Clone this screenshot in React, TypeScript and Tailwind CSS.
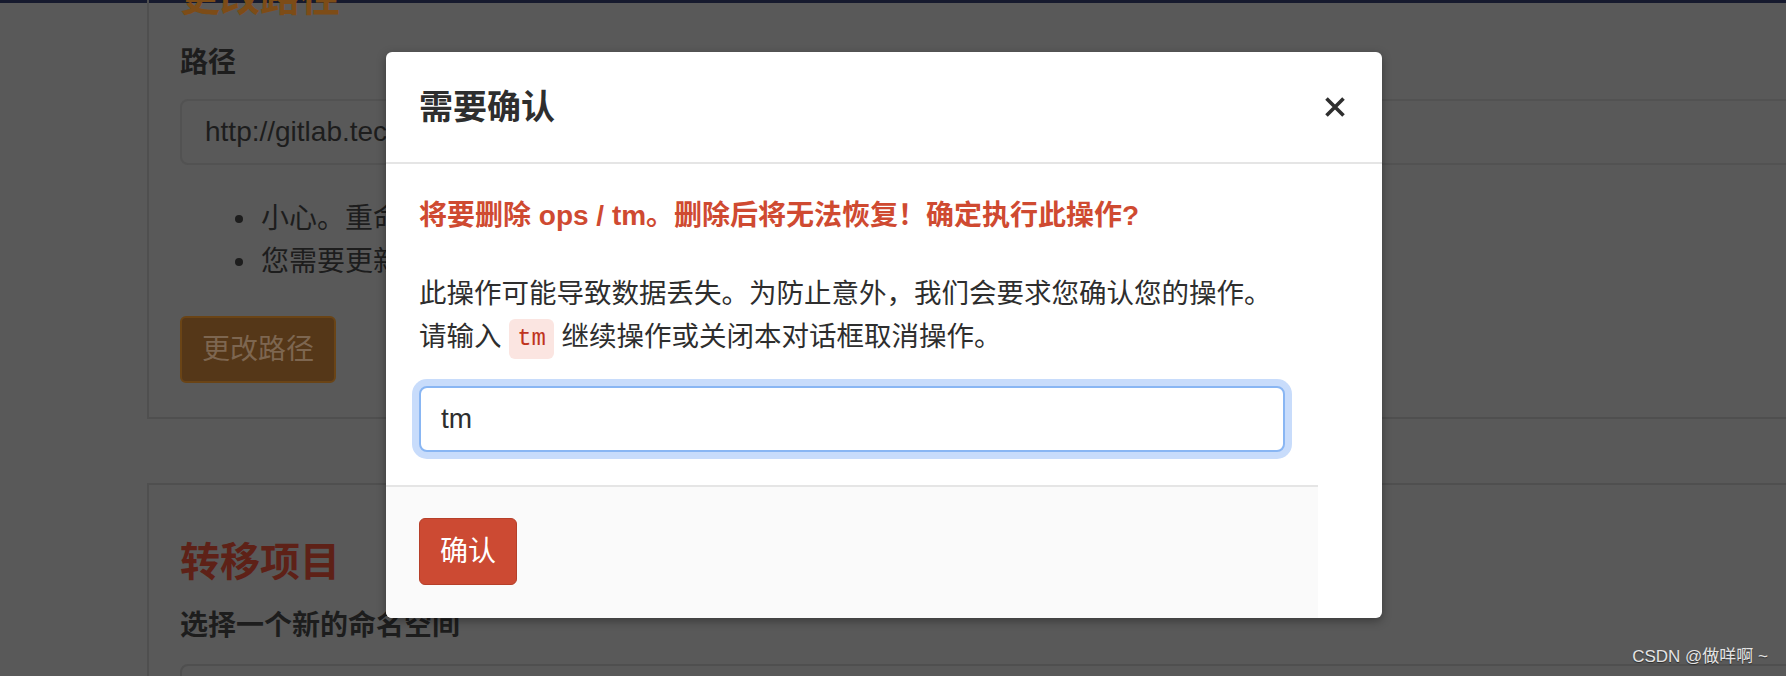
import React from 'react'

const CloseIcon: React.FC = () => (
	<svg width="22" height="22" viewBox="0 0 22 22" fill="none">
		<path d="M2.5 2.5 L19.5 19.5 M19.5 2.5 L2.5 19.5" stroke="#2e2e2e" strokeWidth="3.6" />
	</svg>
)

const ConfirmModal: React.FC = () => {
	return (
		<div className="absolute left-[386px] top-[52px] flex h-[566px] w-[996px] flex-col overflow-hidden rounded-[6px] bg-white shadow-[0_3px_10px_rgba(0,0,0,0.35)]">
			<div className="flex h-[112px] shrink-0 items-center justify-between border-b-2 border-[#e5e5e5] pl-[33px] pr-[36px]">
				<h3 className="text-[34px] font-bold leading-[44px] text-[#2e2e2e]">需要确认</h3>
				<button className="flex h-[22px] w-[22px] items-center justify-center">
					<CloseIcon />
				</button>
			</div>
			<div className="w-[932px] px-[33px] pb-[33px] pt-[30px]">
				<p className="mb-[35px] whitespace-nowrap text-[28px] font-bold leading-[43px] text-[#cf4a31]">
					将要删除 ops / tm。删除后将无法恢复！确定执行此操作?
				</p>
				<p className="mb-[27px] whitespace-nowrap text-[27.5px] leading-[43px] text-[#2e2e2e]">
					此操作可能导致数据丢失。为防止意外，我们会要求您确认您的操作。
					<br />
					请输入{' '}
					<code className="inline-block rounded-[6px] bg-[#fbe5e1] px-[8px] align-middle font-['Liberation_Mono','DejaVu_Sans_Mono',monospace] text-[24px] leading-[40px] text-[#c0341d]">
						tm
					</code>{' '}
					继续操作或关闭本对话框取消操作。
				</p>
				<div className="flex h-[66px] w-[866px] items-center rounded-[8px] border-2 border-[#89b6f3] bg-white pl-[20px] text-[28px] text-[#2e2e2e] shadow-[0_0_0_7px_#c8dcfb]">
					tm
				</div>
			</div>
			<div className="w-[932px] flex-1 border-t-2 border-[#e5e5e5] bg-[#fafafa] px-[33px] pt-[31px]">
				<button className="rounded-[6px] border border-[#b63f29] bg-[#cc4a33] px-[20px] py-[11px] text-[28px] leading-[43px] text-white">
					确认
				</button>
			</div>
		</div>
	)
}

const App: React.FC = () => {
	return (
		<div className="relative h-[676px] w-full overflow-hidden bg-[#595959] font-['Liberation_Sans','Noto_Sans_CJK_SC',sans-serif] text-[#1d1d1d]">
			<div className="h-[3px] bg-[#161a2e]" />
			<div className="ml-[147px] w-[1700px]">
				<section className="border-b-2 border-l-2 border-[#4f4f4f] pb-[34px] pl-[31px]">
					<h2 className="-mt-[30px] text-[40px] font-bold leading-[48px] text-[#7d4c17]">更改路径</h2>
					<div className="mt-[20px] text-[28px] font-bold leading-[43px]">路径</div>
					<div className="mt-[15px] flex h-[66px] items-center rounded-[8px] border-2 border-[#525252] pl-[23px] text-[28px]">
						http://gitlab.tech.com/ops/
					</div>
					<div className="mt-[32px] text-[28px] leading-[43px]">
						<div className="flex items-center">
							<span className="ml-[55px] mr-[18px] h-[8px] w-[8px] rounded-full bg-[#1d1d1d]" />
							小心。重命名项目的仓库可能会产生意想不到的副作用。
						</div>
						<div className="flex items-center">
							<span className="ml-[55px] mr-[18px] h-[8px] w-[8px] rounded-full bg-[#1d1d1d]" />
							您需要更新本地存储库以指向新位置。
						</div>
					</div>
					<button className="mt-[33px] rounded-[6px] border-2 border-[#6a4416] bg-[#553718] px-[20px] py-[10px] text-[28px] leading-[43px] text-[#7d6650]">
						更改路径
					</button>
				</section>
				<section className="mt-[64px] border-l-2 border-t-2 border-[#4f4f4f] pl-[31px] pt-[53px]">
					<h2 className="text-[40px] font-bold leading-[48px] text-[#5e2117]">转移项目</h2>
					<div className="mt-[18px] text-[28px] font-bold leading-[43px]">选择一个新的命名空间</div>
					<div className="mt-[17px] h-[66px] rounded-[8px] border-2 border-[#4f4f4f]" />
				</section>
			</div>
			<ConfirmModal />
			<div className="absolute right-[18px] top-[646px] text-[17px] leading-[22px] text-[#e4e4e4] [text-shadow:0_1px_1px_rgba(0,0,0,0.5)]">
				CSDN @做咩啊 ~
			</div>
		</div>
	)
}

export default App
